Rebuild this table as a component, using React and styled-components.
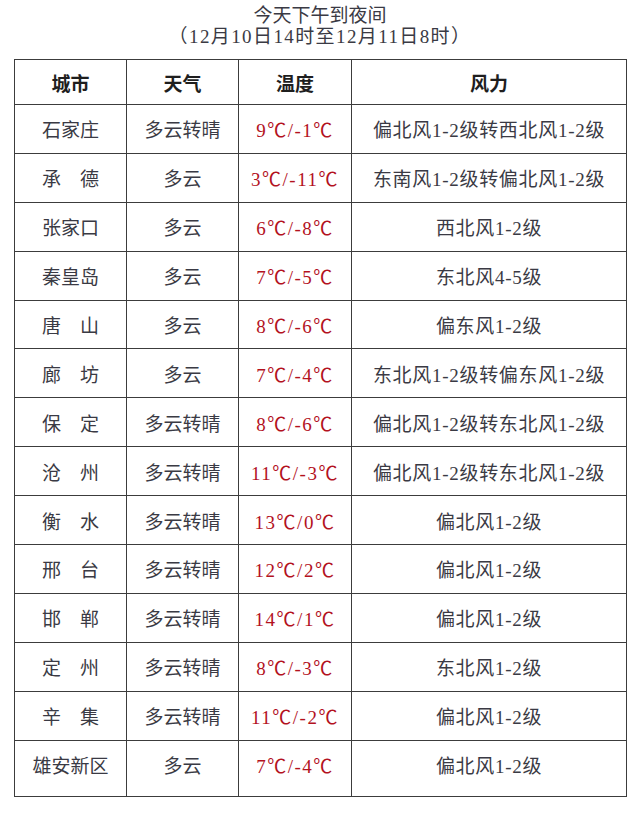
import React from "react";
import styled, { createGlobalStyle } from "styled-components";

const GlobalStyle = createGlobalStyle`
	html, body {
		margin: 0;
		padding: 0;
		background: #ffffff;
	}
	body {
		font-family: "Liberation Serif", "Noto Sans CJK SC", serif;
	}
`;

const Page = styled.div`
	width: 640px;
	height: 828px;
	display: flex;
	flex-direction: column;
	align-items: center;
	padding-top: 5px;
	box-sizing: border-box;
`;

const Title = styled.div`
	font-size: 19px;
	line-height: 21px;
	color: #3a3a44;
	text-align: center;
	margin-bottom: 12px;
`;

const TitleLine = styled.div`
	letter-spacing: ${(p) => (p.$wide ? "1.4px" : "0")};
`;

const Table = styled.table`
	width: 612px;
	border-collapse: collapse;
	table-layout: fixed;
	margin-left: 1px;
`;

const HeadCell = styled.th`
	height: 44px;
	border: 1px solid #3c3c3c;
	font-size: 19px;
	font-weight: 600;
	color: #1e1e1e;
	text-align: center;
	vertical-align: middle;
	padding: 0;
`;

const Cell = styled.td`
	height: 47.9px;
	border: 1px solid #3c3c3c;
	border-top-color: #6a6a6a;
	font-size: 19px;
	letter-spacing: ${(p) => p.$spacing || "0"};
	color: ${(p) => (p.$red ? "#b3121e" : "#3a3a44")};
	text-align: center;
	vertical-align: middle;
	padding: ${(p) => (p.$last ? "0 0 8px" : "0")};
	white-space: nowrap;
`;

const rows = [
	["石家庄", "多云转晴", "9℃/-1℃", "偏北风1-2级转西北风1-2级"],
	["承　德", "多云", "3℃/-11℃", "东南风1-2级转偏北风1-2级"],
	["张家口", "多云", "6℃/-8℃", "西北风1-2级"],
	["秦皇岛", "多云", "7℃/-5℃", "东北风4-5级"],
	["唐　山", "多云", "8℃/-6℃", "偏东风1-2级"],
	["廊　坊", "多云", "7℃/-4℃", "东北风1-2级转偏东风1-2级"],
	["保　定", "多云转晴", "8℃/-6℃", "偏北风1-2级转东北风1-2级"],
	["沧　州", "多云转晴", "11℃/-3℃", "偏北风1-2级转东北风1-2级"],
	["衡　水", "多云转晴", "13℃/0℃", "偏北风1-2级"],
	["邢　台", "多云转晴", "12℃/2℃", "偏北风1-2级"],
	["邯　郸", "多云转晴", "14℃/1℃", "偏北风1-2级"],
	["定　州", "多云转晴", "8℃/-3℃", "东北风1-2级"],
	["辛　集", "多云转晴", "11℃/-2℃", "偏北风1-2级"],
	["雄安新区", "多云", "7℃/-4℃", "偏北风1-2级"],
];

export default function App() {
	return (
		<>
			<GlobalStyle />
			<Page>
				<Title>
					<TitleLine>今天下午到夜间</TitleLine>
					<TitleLine $wide>（12月10日14时至12月11日8时）</TitleLine>
				</Title>
				<Table>
					<colgroup>
						<col style={{ width: "112px" }} />
						<col style={{ width: "112px" }} />
						<col style={{ width: "113px" }} />
						<col style={{ width: "275px" }} />
					</colgroup>
					<thead>
						<tr>
							<HeadCell>城市</HeadCell>
							<HeadCell>天气</HeadCell>
							<HeadCell>温度</HeadCell>
							<HeadCell>风力</HeadCell>
						</tr>
					</thead>
					<tbody>
						{rows.map((r, i) => {
							const last = i === rows.length - 1;
							return (
								<tr key={r[0]}>
									<Cell $last={last}>{r[0]}</Cell>
									<Cell $last={last}>{r[1]}</Cell>
									<Cell $last={last} $red $spacing="1.5px">
										{r[2]}
									</Cell>
									<Cell $last={last} $spacing="0.7px">
										{r[3]}
									</Cell>
								</tr>
							);
						})}
					</tbody>
				</Table>
			</Page>
		</>
	);
}
